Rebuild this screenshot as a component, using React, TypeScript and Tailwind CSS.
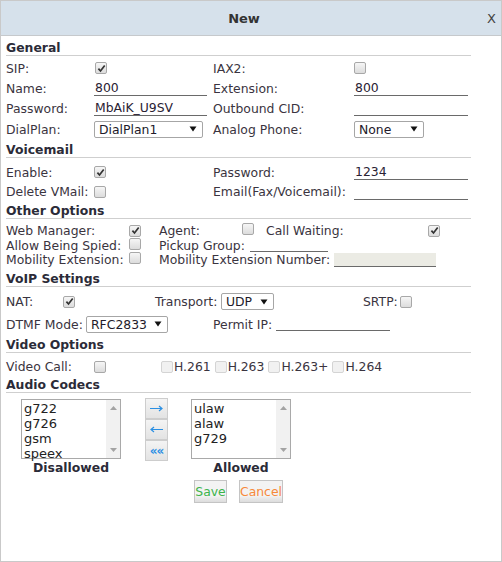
import { clsx } from 'clsx'

function Check({ checked, disabled, className }: { checked?: boolean; disabled?: boolean; className?: string }) {
  return (
    <span
      className={clsx(
        'inline-flex items-center justify-center w-[12px] h-[12px] rounded-[2px] border shrink-0',
        disabled
          ? 'border-[#d4d4d4] bg-[#f1f1f1]'
          : 'border-[#a8a8a8] bg-linear-to-b from-[#f6f6f6] to-[#dcdcdc]',
        className
      )}
    >
      {checked && (
        <svg width="9" height="9" viewBox="0 0 9 9">
          <path d="M1.4 4.6 L3.5 7 L7.7 1.4" stroke="#333" strokeWidth="1.7" fill="none" />
        </svg>
      )}
    </span>
  )
}

function Line({ value, className }: { value?: string; className?: string }) {
  return (
    <div className={clsx('h-[16px] border-b border-[#6a6a6a] px-[1px] leading-[15px] text-[#2a2233]', className)}>
      {value}
    </div>
  )
}

function Select({ value, className }: { value: string; className?: string }) {
  return (
    <div
      className={clsx(
        'h-[17px] flex items-center justify-between pl-[4px] pr-[5px] bg-white border border-[#a6a6a6] rounded-[2px] text-[#221a2a]',
        className
      )}
    >
      <span className="leading-[15px]">{value}</span>
      <svg width="8" height="6" viewBox="0 0 8 6">
        <path d="M0.5 0.5 H7.5 L4 5.5 Z" fill="#111" />
      </svg>
    </div>
  )
}

function Title({ children, className }: { children: string; className?: string }) {
  return (
    <div className={clsx('w-[465px] font-bold border-b border-[#cfcfcf] text-[#2b2b38]', className)}>
      {children}
    </div>
  )
}

function ListBox({ items }: { items: string[] }) {
  return (
    <div className="w-[100px] h-[60px] border border-[#a9a9a9] flex bg-white">
      <div className="flex-1 pl-[2px] pt-[1px] text-[#222] text-[13px]">
        {items.map((it) => (
          <div key={it} className="leading-[15px]">
            {it}
          </div>
        ))}
      </div>
      <div className="w-[14px] bg-[#f1f1f1] flex flex-col justify-between items-center py-[6px]">
        <svg width="7" height="4" viewBox="0 0 7 4">
          <path d="M0 4 L3.5 0 L7 4 Z" fill="#a3a3a3" />
        </svg>
        <svg width="7" height="4" viewBox="0 0 7 4">
          <path d="M0 0 L3.5 4 L7 0 Z" fill="#a3a3a3" />
        </svg>
      </div>
    </div>
  )
}

function MoveButton({ children }: { children: React.ReactNode }) {
  return (
    <div className="w-[23px] h-[21px] border border-[#cdcdcd] bg-linear-to-b from-[#f4f4f4] to-[#e3e3e3] flex items-center justify-center text-[#2a8fe3]">
      {children}
    </div>
  )
}

export default function App() {
  return (
    <div className="w-[502px] h-[562px] border border-[#c9c9c9] bg-white whitespace-nowrap font-['DejaVu_Sans',Verdana,sans-serif] text-[12.4px] leading-[15px] text-[#3a3440]">
      <div className="h-[35px] flex items-center bg-[#d6e1eb] border-b border-[#c6c9cc]">
        <div className="flex-1 text-center font-bold text-[13px] text-[#333]">New</div>
        <div className="w-[14px] text-[13px] text-[#444]">X</div>
      </div>

      <div className="px-[5px]">
        {/* General */}
        <Title className="pt-[4px] leading-[15px]">General</Title>
        <div className="mt-[2px] grid grid-cols-[88px_119px_141px_114px]">
          <div className="h-[20px] flex items-center">SIP:</div>
          <div className="flex items-center"><Check checked className="ml-[1px]" /></div>
          <div className="flex items-center">IAX2:</div>
          <div className="flex items-center"><Check /></div>

          <div className="h-[20px] flex items-center">Name:</div>
          <div className="flex items-center"><Line value="800" className="w-[113px]" /></div>
          <div className="flex items-center">Extension:</div>
          <div className="flex items-center"><Line value="800" className="w-[114px]" /></div>

          <div className="h-[20px] flex items-center">Password:</div>
          <div className="flex items-center"><Line value="MbAiK_U9SV" className="w-[113px]" /></div>
          <div className="flex items-center">Outbound CID:</div>
          <div className="flex items-center"><Line className="w-[114px]" /></div>

          <div className="h-[22px] flex items-center">DialPlan:</div>
          <div className="flex items-center"><Select value="DialPlan1" className="w-[109px]" /></div>
          <div className="flex items-center">Analog Phone:</div>
          <div className="flex items-center"><Select value="None" className="w-[70px]" /></div>
        </div>

        {/* Voicemail */}
        <Title className="pt-[3px] leading-[14px]">Voicemail</Title>
        <div className="mt-[4px] grid grid-cols-[88px_119px_141px_114px]">
          <div className="h-[20px] flex items-center">Enable:</div>
          <div className="flex items-center"><Check checked /></div>
          <div className="flex items-center">Password:</div>
          <div className="flex items-center"><Line value="1234" className="w-[114px]" /></div>

          <div className="h-[19px] flex items-center">Delete VMail:</div>
          <div className="flex items-center"><Check /></div>
          <div className="flex items-center">Email(Fax/Voicemail):</div>
          <div className="flex items-center"><Line className="w-[114px]" /></div>
        </div>

        {/* Other Options */}
        <Title className="pt-[3px] leading-[14px]">Other Options</Title>
        <div className="mt-[4px]">
          <div className="h-[15px] flex items-center">
            <div className="w-[123px]">Web Manager:</div>
            <div className="w-[30px]"><Check checked /></div>
            <div className="w-[83px]">Agent:</div>
            <div className="w-[24px]"><Check /></div>
            <div className="w-[162px]">Call Waiting:</div>
            <Check checked />
          </div>
          <div className="h-[14px] flex items-center">
            <div className="w-[123px]">Allow Being Spied:</div>
            <div className="w-[30px]"><Check /></div>
            <div className="w-[91px]">Pickup Group:</div>
            <div className="w-[78px] h-[13px] border-b border-[#6a6a6a]" />
          </div>
          <div className="h-[15px] flex items-center">
            <div className="w-[123px]">Mobility Extension:</div>
            <div className="w-[30px]"><Check /></div>
            <div className="w-[175px]">Mobility Extension Number:</div>
            <div className="w-[102px] h-[14px] bg-[#ebebe4] border-b border-[#6a6a6a]" />
          </div>
        </div>

        {/* VoIP Settings */}
        <Title className="pt-[4px] leading-[15px]">VoIP Settings</Title>
        <div className="mt-[5px] h-[19px] flex items-center">
          <div className="w-[57px]">NAT:</div>
          <Check checked />
          <div className="ml-[80px] w-[66px]">Transport:</div>
          <Select value="UDP" className="w-[53px]" />
          <div className="ml-[89px] w-[37px]">SRTP:</div>
          <Check />
        </div>
        <div className="mt-[4px] h-[18px] flex items-center">
          <div className="w-[80px]">DTMF Mode:</div>
          <Select value="RFC2833" className="w-[82px]" />
          <div className="ml-[45px] w-[63px]">Permit IP:</div>
          <div className="w-[114px] h-[14px] border-b border-[#6a6a6a]" />
        </div>

        {/* Video Options */}
        <Title className="pt-[5px] leading-[14px]">Video Options</Title>
        <div className="mt-[4px] h-[19px] flex items-center">
          <div className="w-[88px]">Video Call:</div>
          <Check />
          <div className="ml-[55px] flex items-center gap-[4px]">
            {['H.261', 'H.263', 'H.263+', 'H.264'].map((c) => (
              <div key={c} className="flex items-center gap-[1px]">
                <Check disabled className="w-[11px] h-[11px]" />
                <span>{c}</span>
              </div>
            ))}
          </div>
        </div>

        {/* Audio Codecs */}
        <Title className="pt-[2px] leading-[14px]">Audio Codecs</Title>
        <div className="mt-[6px] ml-[15px] flex items-start">
          <div className="flex flex-col items-center">
            <ListBox items={['g722', 'g726', 'gsm', 'speex']} />
            <div className="mt-[1px] font-bold text-[#2b2b38]">Disallowed</div>
          </div>
          <div className="ml-[24px] -mt-[1px] flex flex-col">
            <MoveButton>
              <svg width="13" height="7" viewBox="0 0 13 7">
                <path d="M0 3.5 H12 M9 1 L12 3.5 L9 6" stroke="currentColor" strokeWidth="1.2" fill="none" />
              </svg>
            </MoveButton>
            <MoveButton>
              <svg width="13" height="7" viewBox="0 0 13 7">
                <path d="M13 3.5 H1 M4 1 L1 3.5 L4 6" stroke="currentColor" strokeWidth="1.2" fill="none" />
              </svg>
            </MoveButton>
            <MoveButton>
              <span className="text-[12px] font-bold leading-[12px] tracking-[-1px]">««</span>
            </MoveButton>
          </div>
          <div className="ml-[23px] flex flex-col items-center">
            <ListBox items={['ulaw', 'alaw', 'g729']} />
            <div className="mt-[1px] font-bold text-[#2b2b38]">Allowed</div>
          </div>
        </div>

        <div className="mt-[5px] ml-[188px] flex gap-[12px]">
          <div className="w-[33px] h-[23px] border border-[#c4c4c4] bg-linear-to-b from-[#f3f3f3] from-70% to-[#dcdcdc] flex items-center justify-center text-[#3cb44b]">
            Save
          </div>
          <div className="w-[44px] h-[23px] border border-[#c4c4c4] bg-linear-to-b from-[#f3f3f3] from-70% to-[#dcdcdc] flex items-center justify-center text-[#f7893a]">
            Cancel
          </div>
        </div>
      </div>
    </div>
  )
}
